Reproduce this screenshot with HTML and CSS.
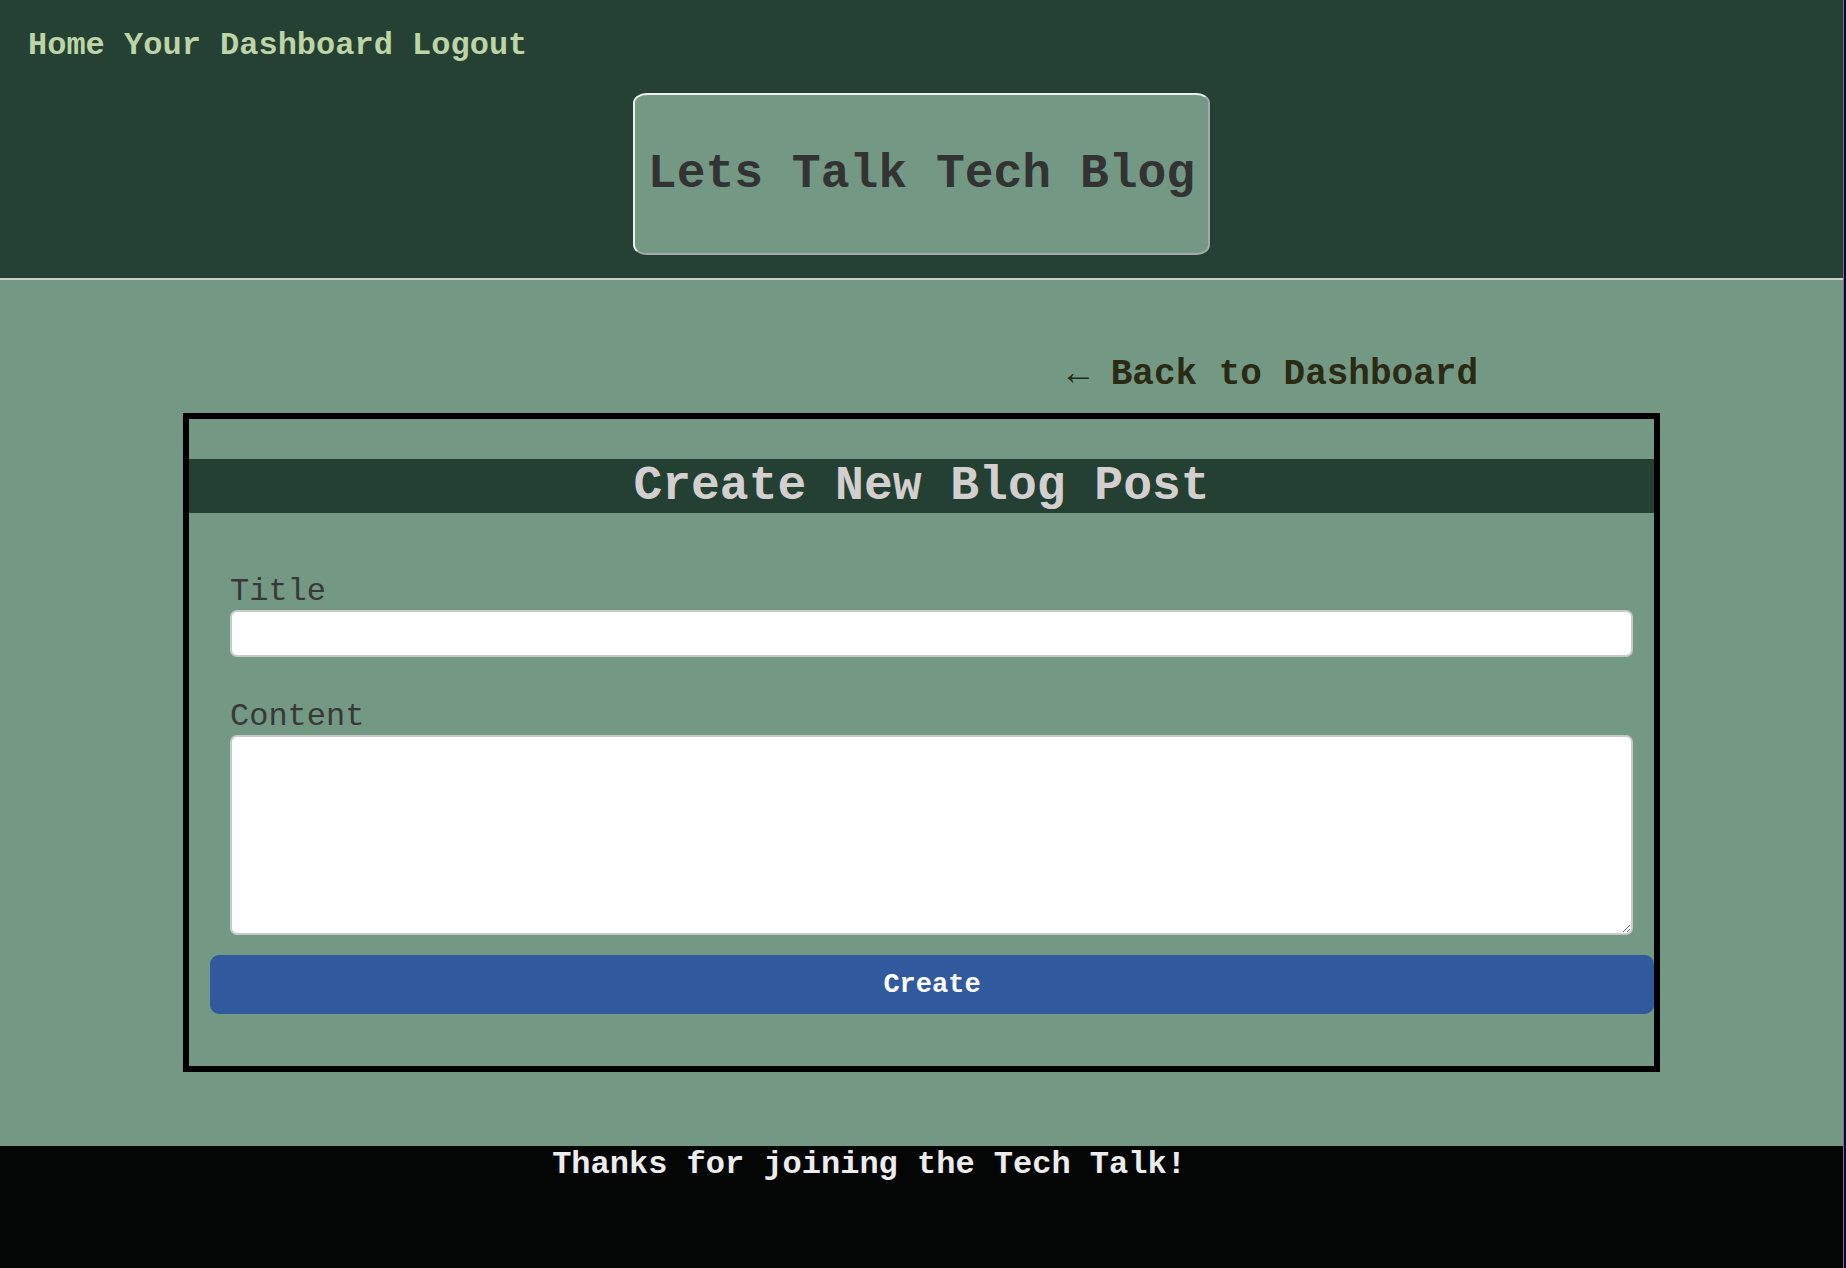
FILE: index.html
```html
<!DOCTYPE html>
<html lang="en">
<head>
<meta charset="utf-8">
<title>Lets Talk Tech Blog</title>
<link rel="stylesheet" href="styles.css">
</head>
<body>
<header class="site-header">
  <nav class="nav">
    <a href="#" class="nav-link">Home</a> <a href="#" class="nav-link">Your Dashboard</a> <a href="#" class="nav-link">Logout</a>
  </nav>
  <div class="brand">
    <h1 class="brand-title">Lets Talk Tech Blog</h1>
  </div>
</header>
<main class="main">
  <div class="back-row">
    <a href="#" class="back-link"><span class="arrow">←</span> Back to Dashboard</a>
  </div>
  <section class="card">
    <h2 class="card-title">Create New Blog Post</h2>
    <form class="post-form">
      <label class="field-label" for="title">Title</label>
      <input class="field-input" id="title" type="text">
      <label class="field-label field-label-gap" for="content">Content</label>
      <textarea class="field-textarea" id="content"></textarea>
      <button type="button" class="create-btn">Create</button>
    </form>
  </section>
</main>
<footer class="site-footer">
  <p class="footer-text">Thanks for joining the Tech Talk!</p>
</footer>
</body>
</html>
```

FILE: styles.css
```css
html {
  background: #160038;
  margin: 0;
  padding: 0;
}

body {
  margin: 0 2px 0 0;
  border-right: 1px solid rgba(255, 255, 255, 0.45);
  font-family: "Liberation Mono", "Courier New", monospace;
  min-height: 1268px;
  display: flex;
  flex-direction: column;
  background: #040606;
}

.site-header {
  background: #254134;
  padding: 27px 28px 23px;
  border-bottom: 2px solid #cfcfcf;
}

.nav {
  font-size: 32px;
  font-weight: bold;
  line-height: normal;
}

.nav-link {
  color: #bdd4a6;
  text-decoration: none;
}

.brand {
  display: flex;
  justify-content: center;
  margin-top: 29px;
}

.brand-title {
  margin: 0;
  width: 551px;
  height: 158px;
  box-sizing: content-box;
  padding: 0 11px;
  display: flex;
  align-items: center;
  justify-content: center;
  background: #739985;
  color: #333333;
  font-size: 48px;
  font-weight: bold;
  border-style: solid;
  border-width: 2px;
  border-color: #eeeeee #a8a8a8 #a8a8a8 #eeeeee;
  border-radius: 14px / 10px;
  white-space: nowrap;
}

.main {
  background: #739985;
  padding: 74px 0 74px;
}

.back-row {
  display: flex;
  justify-content: flex-end;
  padding-right: 365px;
  margin-bottom: 18px;
}

.back-link {
  font-size: 36px;
  font-weight: bold;
  color: #2b2a13;
  text-decoration: none;
  line-height: normal;
}

.arrow {
  font-weight: normal;
}

.card {
  width: 1465px;
  margin: 0 auto;
  border: 6px solid #000000;
  padding: 40px 0 52px;
  box-sizing: content-box;
}

.card-title {
  margin: 0;
  background: #244033;
  color: #d4cfcf;
  font-size: 48px;
  font-weight: bold;
  text-align: center;
  line-height: normal;
}

.post-form {
  display: flex;
  flex-direction: column;
  align-items: flex-start;
  padding: 60px 0 0 21px;
}

.field-label {
  font-size: 32px;
  color: #383838;
  line-height: normal;
  margin-left: 20px;
}

.field-label-gap {
  margin-top: 41px;
}

.field-input,
.field-textarea {
  margin-left: 20px;
  width: 1403px;
  box-sizing: border-box;
  background: #ffffff;
  border: 2px solid #c9c9c9;
  border-radius: 7px;
  font-family: "Liberation Mono", "Courier New", monospace;
  font-size: 20px;
}

.field-input {
  height: 47px;
}

.field-textarea {
  height: 200px;
  display: block;
}

.create-btn {
  margin-top: 20px;
  width: 1444px;
  height: 59px;
  background: #31599e;
  color: #ffffff;
  border: none;
  border-radius: 9px;
  font-family: "Liberation Mono", "Courier New", monospace;
  font-size: 27px;
  font-weight: bold;
}

.site-footer {
  flex: 1;
  background: #040606;
  padding-right: 105px;
}

.footer-text {
  margin: 0;
  text-align: center;
  color: #ececec;
  font-size: 32px;
  font-weight: bold;
  line-height: normal;
}
```
